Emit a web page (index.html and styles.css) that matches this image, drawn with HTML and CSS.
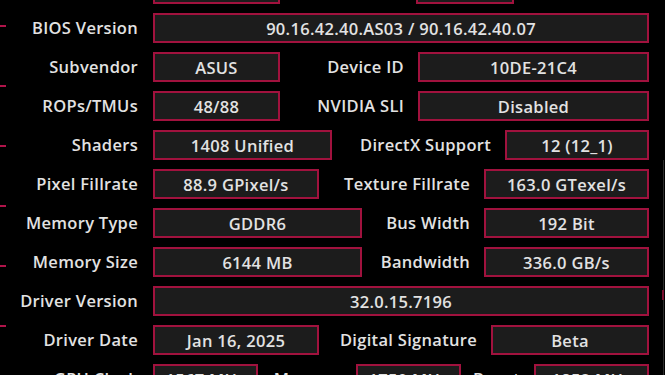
FILE: index.html
```html
<!DOCTYPE html>
<html>
<head>
<meta charset="utf-8">
<link rel="stylesheet" href="styles.css">
</head>
<body>
<div class="panel">
  <div class="row top">
    <span class="lbl first"></span><span class="val w126"></span>
    <span class="lbl mid"></span><span class="val w98"></span><span class="tail"></span>
  </div>
  <div class="row">
    <span class="lbl first">BIOS Version</span><span class="val full">90.16.42.40.AS03 / 90.16.42.40.07</span>
  </div>
  <div class="row">
    <span class="lbl first">Subvendor</span><span class="val w126">ASUS</span>
    <span class="lbl mid">Device ID</span><span class="val w231">10DE-21C4</span>
  </div>
  <div class="row">
    <span class="lbl first">ROPs/TMUs</span><span class="val w126">48/88</span>
    <span class="lbl mid">NVIDIA SLI</span><span class="val w231">Disabled</span>
  </div>
  <div class="row">
    <span class="lbl first">Shaders</span><span class="val w179">1408 Unified</span>
    <span class="lbl mid">DirectX Support</span><span class="val w144">12 (12_1)</span>
  </div>
  <div class="row">
    <span class="lbl first">Pixel Fillrate</span><span class="val w166">88.9 GPixel/s</span>
    <span class="lbl mid">Texture Fillrate</span><span class="val w165">163.0 GTexel/s</span>
  </div>
  <div class="row">
    <span class="lbl first">Memory Type</span><span class="val w209">GDDR6</span>
    <span class="lbl mid">Bus Width</span><span class="val w165">192 Bit</span>
  </div>
  <div class="row">
    <span class="lbl first">Memory Size</span><span class="val w209">6144 MB</span>
    <span class="lbl mid">Bandwidth</span><span class="val w165">336.0 GB/s</span>
  </div>
  <div class="row">
    <span class="lbl first">Driver Version</span><span class="val full">32.0.15.7196</span>
  </div>
  <div class="row">
    <span class="lbl first">Driver Date</span><span class="val w166">Jan 16, 2025</span>
    <span class="lbl mid">Digital Signature</span><span class="val w158">Beta</span>
  </div>
  <div class="row">
    <span class="lbl first">GPU Clock</span><span class="val w105">1567 MHz</span>
    <span class="lbl mid fixed">Memory</span><span class="val w105">1750 MHz</span>
    <span class="lbl mid">Boost</span><span class="val w115">1852 MHz</span>
  </div>
</div>
<div class="edge">
  <i></i><i></i><i></i><i></i><i></i><i></i>
</div>
<div class="rail"><i></i></div>
</body>
</html>
```

FILE: styles.css
```css
html, body {
  margin: 0;
  padding: 0;
  background: #000;
  width: 665px;
  height: 375px;
  overflow: hidden;
}

body {
  font-family: "Open Sans", "Liberation Sans", sans-serif;
  font-weight: 600;
  font-size: 16.5px;
  letter-spacing: 0.3px;
  color: #e2e2e2;
  position: relative;
}

.panel {
  display: flex;
  flex-direction: column;
  gap: 9px;
  margin-top: -26px;
  width: 649px;
}

.row {
  display: flex;
  align-items: center;
  height: 30px;
}

.lbl {
  white-space: nowrap;
  line-height: 30px;
}

.lbl.first {
  flex: none;
  width: 138px;
  text-align: right;
  margin-right: 15px;
}

.lbl.mid {
  flex: 1;
  text-align: right;
  margin-right: 14px;
}

.lbl.mid.fixed {
  flex: none;
  width: 84px;
}

.val {
  flex: none;
  box-sizing: border-box;
  height: 30px;
  border: 2px solid #a1123e;
  background: #1c1c1c;
  display: flex;
  align-items: center;
  justify-content: center;
  white-space: nowrap;
}

.full { flex: 1; }
.w98 { width: 98px; }
.w105 { width: 105px; }
.w115 { width: 115px; }
.w126 { width: 127px; }
.w144 { width: 144px; }
.w158 { width: 158px; }
.w165 { width: 165px; }
.w166 { width: 166px; }
.w179 { width: 179px; }
.w209 { width: 209px; }
.w231 { width: 231px; }

.top .tail {
  flex: none;
  width: 136px;
}
.top .lbl.mid { margin-right: 136px; }

.edge {
  position: absolute;
  left: 0;
  top: 25px;
  display: flex;
  flex-direction: column;
  gap: 58px;
}
.edge i {
  display: block;
  width: 6px;
  height: 2px;
  background: #b0144a;
}

.rail {
  position: absolute;
  left: 663px;
  top: 160px;
  width: 1px;
  height: 215px;
  background: #2c2c2c;
}
.rail i {
  position: absolute;
  left: -1px;
  top: 130px;
  width: 2px;
  height: 10px;
  background: #7a1030;
}
```
